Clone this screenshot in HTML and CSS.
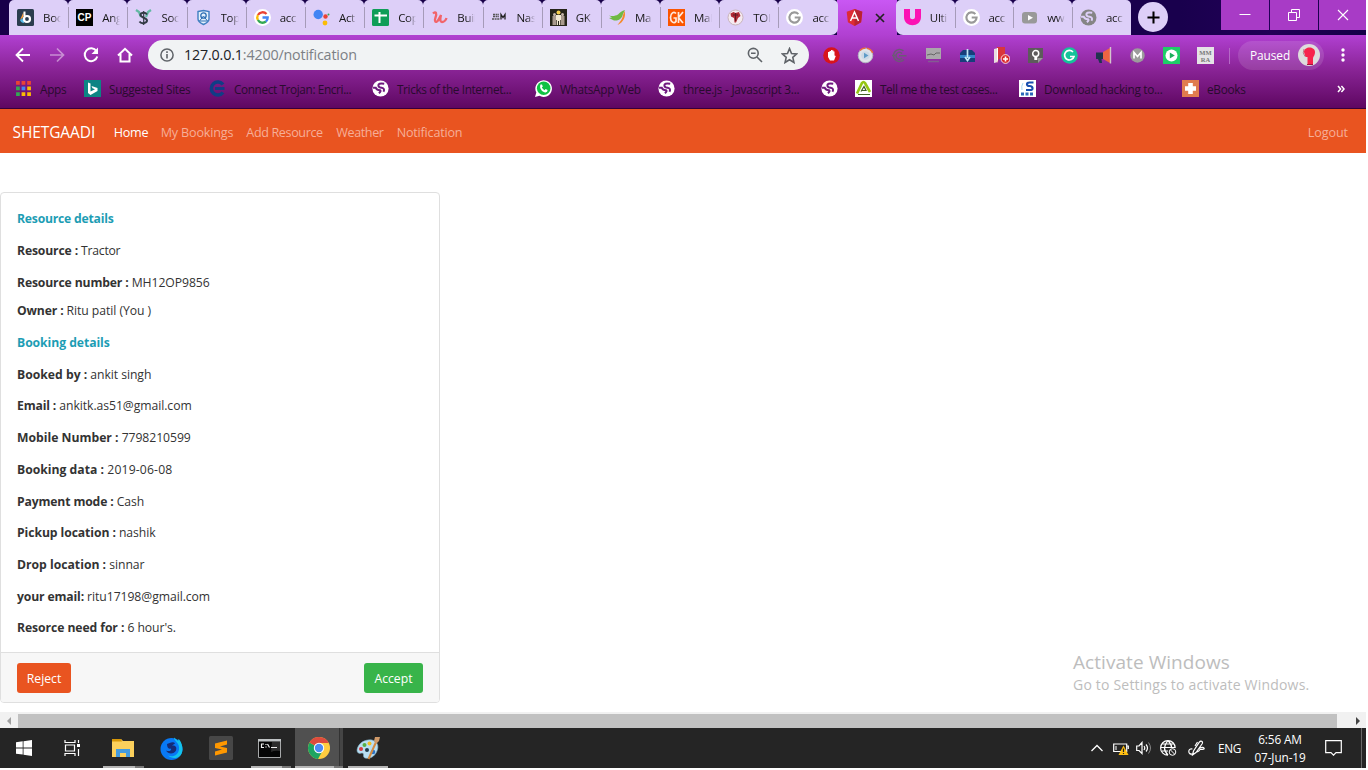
FILE: index.html
```html
<!DOCTYPE html>
<html lang="en">
<head>
<meta charset="utf-8">
<title>Shetgaadi</title>
<link rel="stylesheet" href="styles.css">
</head>
<body>
<svg class="defs" width="0" height="0">
  <symbol id="swirl" viewBox="0 0 16 16"><circle cx="8" cy="8" r="7.600" fill="#fff"/><path d="M11.500 3.500Q5.500 2.500 6 5.500 6.500 7.300 9 7.300 12.500 8 10.800 11M1 7.300H3.500Q4.500 9.600 7.500 9.600 9 10.500 6.500 12.500" fill="none" stroke="#6f1a80" stroke-width="1.900"/></symbol>
  <symbol id="gg" viewBox="0 0 16 16"><circle cx="8" cy="8" r="8" fill="#fff"/><path d="M11.600 4.800A4.800 4.800 0 1 0 12.800 8H8.200" fill="none" stroke="#999" stroke-width="2"/></symbol>
</svg>
<div class="screen">
  <header class="browser">
    <div class="tabstrip">
      <div class="tabs">
        <div class="tab first"><svg class="fav" viewBox="0 0 17 17"><rect width="17" height="17" rx="1.500" fill="#2b3d4f"/><path d="M6.500 3v5L3 11z" fill="#f9a040"/><path d="M3 11l4-2.500V14q-3 0-4-3z" fill="#57b9e8"/><path d="M7.500 2.500v4.500" stroke="#fff" stroke-width="2"/><circle cx="10" cy="10" r="3" fill="none" stroke="#fff" stroke-width="2.200"/></svg><span>Boo</span></div>
        <div class="tab"><svg class="fav" viewBox="0 0 17 17"><rect width="17" height="17" fill="#000"/><text x="8.500" y="12.200" text-anchor="middle" class="g-cp">CP</text></svg><span>Ang</span></div>
        <div class="tab"><svg class="fav" viewBox="0 0 17 17"><path d="M1 1l3 2 2 5M16 1l-3 2-2 5" stroke="#61b8a3" stroke-width="2.200" fill="none"/><path d="M12 5.500C10 2.500 5.500 3.500 5.500 6s6.500 3 6.500 5.500-5.500 4-7.500 1" fill="none" stroke="#333b45" stroke-width="2"/><path d="M8.700 2v14" stroke="#333b45" stroke-width="1.200"/></svg><span>Soc</span></div>
        <div class="tab"><svg class="fav" viewBox="0 0 17 17"><path d="M3 2.500l5.500-1 5.500 1v7.500c0 3-5.500 5.500-5.500 5.500S3 13 3 10z" fill="#e3f0fb" stroke="#3f7fc1" stroke-width="1.400"/><circle cx="8.500" cy="6.500" r="2.700" fill="none" stroke="#2e6fb4" stroke-width="1.300"/><path d="M4.500 12l4-5 4 5z" stroke="#2e6fb4" fill="none"/></svg><span>Top</span></div>
        <div class="tab"><svg class="fav" viewBox="0 0 17 17"><circle cx="8.500" cy="8.500" r="8.500" fill="#fff"/><g fill="none" stroke-width="2.300"><path d="M12.500 5A5.300 5.300 0 0 0 3.900 6" stroke="#ea4335"/><path d="M3.900 6a5.300 5.300 0 0 0 0 5" stroke="#fbbc05"/><path d="M3.900 11a5.300 5.300 0 0 0 8 1.500" stroke="#34a853"/><path d="M11.900 12.500A5 5 0 0 0 13.700 8.500H8.500" stroke="#4285f4"/></g></svg><span>acc</span></div>
        <div class="tab"><svg class="fav" viewBox="0 0 17 17"><circle cx="5.200" cy="5.500" r="4.700" fill="#4285f4"/><circle cx="12.500" cy="7.500" r="2.200" fill="#ea4335"/><circle cx="12" cy="14" r="2.400" fill="#fbbc05"/><circle cx="15.500" cy="5.500" r="1" fill="#34a853"/></svg><span>Act</span></div>
        <div class="tab"><svg class="fav" viewBox="0 0 17 17"><rect width="17" height="17" rx="1.500" fill="#0f9d58"/><path d="M7.500 3v11M2.500 6.500h12.500" stroke="#fff" stroke-width="2"/></svg><span>Cop</span></div>
        <div class="tab"><svg class="fav" viewBox="0 0 17 17"><path d="M2 4.500c3-3 4 0 2.500 4s0 6 2.500 3l3-5.500c-1 4-1 7 1 7s4-2 4.500-4" fill="none" stroke="#f2646a" stroke-width="2.300"/></svg><span>Buil</span></div>
        <div class="tab"><svg class="fav" viewBox="0 0 17 17"><path d="M2 5.500h6M2 7.500h6M1 10h8" stroke="#555" stroke-width="1.300" stroke-dasharray="2 .6"/><path d="M10 10.500V5.500l2 3 2-3v5" fill="none" stroke="#222" stroke-width="1.300"/></svg><span>Nas</span></div>
        <div class="tab"><svg class="fav" viewBox="0 0 17 17"><rect width="17" height="17" fill="#262419"/><path d="M2.500 7h4v9h-4zM10.500 7h4v9h-4z" fill="#a99a8e"/><path d="M6 6h5v5h-1v5H9v-4H8v4H7v-5H6z" fill="#f3e9d2"/><circle cx="8.500" cy="3.500" r="2" fill="#f5cf4d"/><circle cx="4.500" cy="5.500" r="1.500" fill="#c9b8ab"/><circle cx="12.500" cy="5.500" r="1.500" fill="#c9b8ab"/></svg><span>GK</span></div>
        <div class="tab"><svg class="fav" viewBox="0 0 17 17"><path d="M0 6.500c4 1 6 .5 9-1 2-2 4-4 7-4.500l-2 4c-1 5-5 7-9 6.500L0 9l3-.5z" fill="#6fb944"/><path d="M15.500 2c2 6-2 12-7 14 3-4 5-6 5.500-10z" fill="#f58a2b"/></svg><span>Ma</span></div>
        <div class="tab"><svg class="fav" viewBox="0 0 17 17"><rect width="17" height="17" fill="#fb5500"/><path d="M8 4.500C6 2 2.500 4 2.500 8.500S6 15 8 12.500V9H5.500M10.500 3v11M15 3l-4.500 5.500L15 14" fill="none" stroke="#ffe9dc" stroke-width="1.700"/></svg><span>Mak</span></div>
        <div class="tab"><svg class="fav" viewBox="0 0 17 17"><circle cx="8.500" cy="8.500" r="7.500" fill="#f5eaf0" stroke="#c9b5bb"/><path d="M3.500 4.500l3-1.500 2 1 3.500-1 1.500 4-2.500 2-2 4.500H7.500L7 9 4 7.500z" fill="#b02a34"/><path d="M6 6h5M8.500 4v8" stroke="#5d1920"/></svg><span>TOI</span></div>
        <div class="tab last-before"><svg class="fav"><use href="#gg"/></svg><span>acc</span></div>
        <div class="tab active"><svg class="fav" viewBox="0 0 17 17"><path d="M8.500 0l7.800 2.800-1.200 10.400-6.600 3.700-6.600-3.700L.7 2.800z" fill="#dd2c35"/><path d="M8.500 0l7.800 2.800-1.200 10.400-6.600 3.700z" fill="#b92331"/><path d="M4.500 12l4-9 4 9M6.200 9h4.600" fill="none" stroke="#fff" stroke-width="1.500"/></svg><svg class="x" viewBox="0 0 10 10"><path d="M1 1l8 8M9 1L1 9" stroke="#222" stroke-width="1.700"/></svg></div>
        <div class="tab after"><svg class="fav" viewBox="0 0 17 17"><path d="M0 0h6v8c0 3 5 3 5 0V0h6v8c0 11-17 11-17 0z" fill="#fb12b4"/></svg><span>Ulti</span></div>
        <div class="tab late"><svg class="fav"><use href="#gg"/></svg><span>acc</span></div>
        <div class="tab late"><svg class="fav" viewBox="0 0 17 17"><rect x="1" y="3" width="15" height="11.500" rx="3" fill="#999"/><path d="M7 6l5 2.700L7 11.500z" fill="#fff"/></svg><span>www</span></div>
        <div class="tab late end"><svg class="fav" viewBox="0 0 16 16"><circle cx="8" cy="8" r="7.500" fill="#858585"/><path d="M11.500 3.500Q5.500 2.500 6 5.500 6.500 7.300 9 7.300 12.500 8 10.800 11M1 7.300H3.500Q4.500 9.600 7.500 9.600 9 10.500 6.500 12.500" fill="none" stroke="#ddcff8" stroke-width="1.900"/></svg><span>acc</span></div>
      </div>
      <button class="newtab"><svg viewBox="0 0 14 14"><path d="M7 .5v13M.5 7h13" stroke="#000" stroke-width="2.200"/></svg></button>
      <div class="wincontrols">
        <i><svg viewBox="0 0 12 12"><path d="M.5 5.500h11" stroke="#fff"/></svg></i>
        <i><svg viewBox="0 0 12 12"><path d="M.5 3.500h8v8h-8zM3.500 3V.5h8v8H9" fill="none" stroke="#fff"/></svg></i>
        <i><svg viewBox="0 0 12 12"><path d="M1 1l10 10M11 1L1 11" stroke="#fff" stroke-width="1.100"/></svg></i>
      </div>
    </div>
    <div class="toolbar">
      <div class="navicons">
        <svg viewBox="0 0 18 18"><path d="M16 9H3M9 2.500L2.500 9 9 15.500" fill="none" stroke="#fff" stroke-width="1.800"/></svg>
        <svg class="dim" viewBox="0 0 18 18"><path d="M2 9h13M9 2.500L15.500 9 9 15.500" fill="none" stroke="#fff" stroke-width="1.700"/></svg>
        <svg viewBox="0 0 18 18"><path d="M14.500 5.200A6.400 6.400 0 1 0 15.300 10.500" fill="none" stroke="#fff" stroke-width="2"/><path d="M16 1.500V8H9.500z" fill="#fff"/></svg>
        <svg viewBox="0 0 18 18"><path d="M2 9.500L9 2.800l7 6.700M4.500 8v7.500h9V8" fill="none" stroke="#fff" stroke-width="2"/></svg>
      </div>
      <div class="omnibox">
        <svg class="info" viewBox="0 0 14 14"><circle cx="7" cy="7" r="6.100" fill="none" stroke="#5f6368" stroke-width="1.500"/><path d="M7 6v4.500M7 3.300v1.600" stroke="#5f6368" stroke-width="1.600"/></svg>
        <span class="url"><b>127.0.0.1</b>:4200/notification</span>
        <svg class="mag" viewBox="0 0 16 16"><circle cx="6.300" cy="6.300" r="4.900" fill="none" stroke="#5f6368" stroke-width="1.600"/><path d="M10 10l5 5M4 6.300h4.600" stroke="#5f6368" stroke-width="1.600"/></svg>
        <svg class="star" viewBox="0 0 16 16"><path d="M8 1.500l1.900 4.600 4.900.4-3.700 3.200 1.100 4.900L8 12l-4.200 2.600 1.100-4.900L1.200 6.500l4.900-.4z" fill="none" stroke="#5f6368" stroke-width="1.500"/></svg>
      </div>
      <div class="exts">
        <svg viewBox="0 0 17 17"><circle cx="8.500" cy="8.500" r="8.300" fill="#d8141c"/><path d="M5 5v5l2 3.500h4L12.800 9l-1.300-.5V4.500h-1V3.500H9.400V3H8v1H6.500v1z" fill="#fff"/></svg>
        <svg viewBox="0 0 17 17"><circle cx="8.500" cy="8.500" r="7.300" fill="#dfe2e8" stroke="#b3b3c2"/><circle cx="8.500" cy="8.500" r="4.300" fill="#cbd9e6"/><path d="M3 3.500A7.400 7.400 0 0 1 8.500 1M10 1.200A7.400 7.400 0 0 1 15.700 6" stroke="#ed6c3c" stroke-width="1.500" fill="none"/><path d="M7 5.800l4.500 2.700L7 11.200z" fill="#5e9bc7"/></svg>
        <svg viewBox="0 0 17 17"><path d="M12.500 4A6 6 0 1 0 13 12.500M11 6.500a3.400 3.400 0 1 0 0 4.500M8 8.700h7.500M1 8.500h4" fill="none" stroke="#6c5a76" stroke-width="1.500"/></svg>
        <svg viewBox="0 0 17 17"><path d="M1 1h15v11H1z" fill="#aaa7ab"/><path d="M2 8l4-1 3 1 2-2 4 0" stroke="#666" fill="none"/><path d="M3 14.500h11" stroke="#845b92" stroke-width="1.500"/></svg>
        <svg viewBox="0 0 17 17"><path d="M1 6l3-3h9l3 3v9H1z" fill="#173e7b"/><path d="M1 8h15v3H1z" fill="#3285c8"/><path d="M8.500 2v9M6 10l2.500 3.500L11 10" fill="none" stroke="#c2e8f7" stroke-width="1.700"/></svg>
        <svg viewBox="0 0 17 17"><path d="M1 2l4-1v14l-4 1z" fill="#e8dedf"/><path d="M4 0h8v12H6l-2 4z" fill="#d9363b"/><path d="M5 1v12l-1 3V1z" fill="#fff"/><circle cx="12.500" cy="12" r="4.400" fill="#dc292d" stroke="#fff" stroke-width=".8"/><path d="M10 12h5M12.500 9.500v5" stroke="#fff" stroke-width="1.600"/></svg>
        <svg viewBox="0 0 17 17"><path d="M1 1h15v10l-5 5H1z" fill="#5d5b5b"/><path d="M11 16v-5h5z" fill="#999"/><circle cx="8.700" cy="6.600" r="3" fill="none" stroke="#fff" stroke-width="1.500"/><path d="M7.300 10h3v3h-3z" fill="#fff"/></svg>
        <svg viewBox="0 0 17 17"><circle cx="8.500" cy="8.500" r="8.300" fill="#15c39a"/><path d="M12 5A4.800 4.800 0 1 0 13 9.500H9" fill="none" stroke="#fff" stroke-width="1.700"/></svg>
        <svg viewBox="0 0 17 17"><path d="M1 5.500h7V12H6.500l.5 4H4.500L3 12H1z" fill="#20344f"/><path d="M8 5l7-4v15l-7-4z" fill="#ed6442"/><path d="M15.500 0v16.500" stroke="#d4c4cf" stroke-width="1.400"/></svg>
        <svg viewBox="0 0 17 17"><circle cx="8.500" cy="8.500" r="7.200" fill="#9c9c9c"/><path d="M5 11.500v-6l3.500 4 3.500-4v6" fill="none" stroke="#fff" stroke-width="1.700"/></svg>
        <svg viewBox="0 0 17 17"><path d="M0 0h17v17H0z" fill="#1ece67"/><circle cx="8.500" cy="8.500" r="6" fill="#fff"/><path d="M6.800 5.500l5 3-5 3z" fill="#1cae5a"/></svg>
        <svg viewBox="0 0 17 17"><path d="M0 0h17v17H0z" fill="#e5e3e6"/><text x="8.500" y="7.500" text-anchor="middle" class="g-mm">MM</text><text x="8.500" y="14.500" text-anchor="middle" class="g-mm">RA</text></svg>
      </div>
      <div class="profile"><span>Paused</span><svg viewBox="0 0 22 22"><circle cx="11" cy="11" r="11" fill="#dedcdc"/><path d="M6 8c0-6 11-6 11 0 0 4-2 4-2 7v6H9.500v-8H7.500z" fill="#f7234c"/><path d="M6 5q-2 4 1 7.500" stroke="#bb7c8a" fill="none"/><path d="M9 20.500h6" stroke="#a2173c"/></svg></div>
      <svg class="dots" viewBox="0 0 4 14"><circle cx="2" cy="2" r="1.700"/><circle cx="2" cy="7" r="1.700"/><circle cx="2" cy="12" r="1.700"/></svg>
    </div>
    <div class="bookmarks">
      <div class="bm b1"><svg viewBox="0 0 16 16"><g><path d="M1 1h3.500v3.500H1zM6.200 1h3.500v3.500H6.200zM11.500 1H15v3.500h-3.500z" fill="#ea4335"/><path d="M1 6.200h3.500v3.500H1zM1 11.500h3.500V15H1z" fill="#34a853"/><path d="M6.200 6.200h3.500v3.500H6.200z" fill="#4285f4"/><path d="M11.500 6.200H15v3.500h-3.500zM6.200 11.500h3.500V15H6.200zM11.500 11.500H15V15h-3.500z" fill="#fbbc05"/></g></svg><span>Apps</span></div>
      <div class="bm b2"><svg viewBox="0 0 17 17"><path d="M0 0h17v17H0z" fill="#0c8484"/><path d="M4 2.500l2.500 1v8L11 9.300 8.500 8.300 7.500 6 13.500 8v3L6.500 15 4 13z" fill="#fff"/></svg><span>Suggested Sites</span></div>
      <div class="bm b3"><svg viewBox="0 0 17 17"><path d="M14 4.500A6.500 6.500 0 1 0 14 12.500" fill="none" stroke="#103d86" stroke-width="3.600"/><path d="M6 8.500h9.500" stroke="#103d86" stroke-width="2.800"/></svg><span>Connect Trojan: Encri...</span></div>
      <div class="bm b4"><svg><use href="#swirl"/></svg><span>Tricks of the Internet...</span></div>
      <div class="bm b5"><svg viewBox="0 0 17 17"><path d="M0 17l1.300-4.500A8.300 8.300 0 1 1 4.500 15.800z" fill="#fff"/><circle cx="8.700" cy="8.300" r="6.800" fill="#0fc143"/><path d="M5.500 4.500l1.500 0 .8 2-1 1.100q1 1.800 2.800 2.600l1-1.100 2 1q0 2.500-2.500 2.300C7 12 4 8 5.500 4.500z" fill="#fff"/></svg><span>WhatsApp Web</span></div>
      <div class="bm b6"><svg><use href="#swirl"/></svg><span>three.js - Javascript 3...</span></div>
      <div class="bm b7"><svg><use href="#swirl"/></svg></div>
      <div class="bm b8"><svg viewBox="0 0 17 17"><path d="M0 0h17v17H0z" fill="#fff"/><path d="M2 13.500L7 3q1.500-2 3 0l5 9" fill="none" stroke="#96c713" stroke-width="2.600"/><path d="M3 14.500h12M6 11.500l3-5 2 4H7" fill="none" stroke="#415f26" stroke-width="1.200"/></svg><span>Tell me the test cases...</span></div>
      <div class="bm b9"><svg viewBox="0 0 17 17"><path d="M0 0h17v17H0z" fill="#fff"/><path d="M14.500 2.500H10.500Q8 2.500 8 4.300T10.500 6 13.500 8 10.500 10H7" fill="none" stroke="#174eae" stroke-width="2.200"/><path d="M2 12.500h3v3H2zM6.500 12.500h3v3h-3zM11 12.500h3v3h-3z" fill="#2a68b9"/><path d="M4 3q-2 3-1 7" stroke="#a3d7ef" fill="none"/></svg><span>Download hacking to...</span></div>
      <div class="bm b10"><svg viewBox="0 0 17 17"><path d="M0 0h17v17H0z" fill="#e07c4f"/><path d="M8.500 3v11M3 8.500h11" stroke="#fff" stroke-width="4.600"/></svg><span>eBooks</span></div>
      <svg class="more" viewBox="0 0 8 8"><path d="M1 1l2.600 3L1 7M4.400 1L7 4 4.400 7" fill="none" stroke="#fff" stroke-width="1.500"/></svg>
    </div>
  </header>

  <nav class="navbar">
    <a class="brand">SHETGAADI</a>
    <a class="on">Home</a><a class="n2">My Bookings</a><a class="n3">Add Resource</a><a class="n4">Weather</a><a class="n5">Notification</a>
    <a class="logout">Logout</a>
  </nav>

  <main class="page">
    <section class="card">
      <div class="card-body">
        <h6 class="snug">Resource details</h6>
        <p class="snug"><b>Resource :</b> Tractor</p>
        <p class="tight"><b>Resource number :</b> MH12OP9856</p>
        <p><b>Owner :</b> Ritu patil (You )</p>
        <h6>Booking details</h6>
        <p><b class="wide">Booked by :</b> ankit singh</p>
        <p><b>Email :</b> ankitk.as51@gmail.com</p>
        <p><b class="wide">Mobile Number :</b> 7798210599</p>
        <p class="loose"><b class="wide">Booking data :</b> 2019-06-08</p>
        <p><b>Payment mode :</b> Cash</p>
        <p><b class="mid">Pickup location :</b> nashik</p>
        <p><b class="wide">Drop location :</b> sinnar</p>
        <p><b>your email:</b> ritu17198@gmail.com</p>
        <p><b class="mid">Resorce need for :</b> 6 hour's.</p>
      </div>
      <footer><button class="reject">Reject</button><button class="accept">Accept</button></footer>
    </section>
    <aside class="watermark"><div class="w1">Activate Windows</div><div class="w2">Go to Settings to activate Windows.</div></aside>
  </main>

  <div class="hscroll"><svg class="sl" viewBox="0 0 18 16"><path d="M11 5v8L7 9z" fill="#a0a0a0"/></svg><div class="thumb"></div><svg class="sr" viewBox="0 0 17 16"><path d="M7 5v8l4-4z" fill="#444"/></svg></div>

  <div class="taskbar">
    <div class="tb start"><svg viewBox="0 0 16 16"><path d="M0 2.300l6.700-1v6.200H0zM7.500 1.200L16 0v7.500H7.500zM0 8.400h6.700v6.200L0 13.700zM7.500 8.400H16V16l-8.500-1.200z" fill="#fff"/></svg></div>
    <div class="tb view"><svg viewBox="0 0 17 16"><path d="M1 0v2.500h10V0M1 16v-2.500h10V16M1.500 5h9v6h-9zM14.500 0v3M14.500 9v7" fill="none" stroke="#fff" stroke-width="1.200"/><path d="M13 4h3v3h-3z" fill="#fff"/></svg></div>
    <div class="tb files run stack"><svg viewBox="0 0 22 19"><path d="M0 0h9l2 2h11v16H0z" fill="#fbd05c"/><path d="M0 0h9l1 2.500H0z" fill="#d79708"/><path d="M4 18v-8h14v8h-4v-4H8v4z" fill="#439bdf"/></svg></div>
    <div class="tb fox"><svg viewBox="0 0 23 23"><circle cx="11.500" cy="12" r="11" fill="#0879f5"/><path d="M14 .5c0 4 6 5 5 12-1 6-6 8-11 6 4 4 14 4 14.500-6C22.500 7 20 3 18.500 2l-.5 2z" fill="#13c3ed"/><path d="M7 7l4-1.500q3-1 4 1l-3 2c4-.5 5 2 4 5-2 4-8 4-10 0 3 1.500 6 0 5-2-1.500 1-4 0-4-4.500z" fill="#152c76"/></svg></div>
    <div class="tb sub"><svg viewBox="0 0 24 24"><rect width="24" height="24" rx="1.500" fill="#474747"/><path d="M18 4.500v4l-7 2 7 1.500v4.500l-12 3v-4l7-2-7-1.500V7.500z" fill="#ff9800"/></svg></div>
    <div class="tb cmd run stack"><svg viewBox="0 0 23 19"><path d="M.5.500h22v18H.5z" fill="#050505" stroke="#a7a9aa"/><path d="M0 0h23v2.500H0z" fill="#bfc3c5"/><path d="M14 3h8v9q-5-1-9 1z" fill="#2c2c2c"/><path d="M6 5H3.500v3.500H6M8 5v1M8 7.500v1M9.500 5l2 3.500M13 8.500h6" fill="none" stroke="#eee" stroke-width="1.200"/></svg></div>
    <div class="tb chr run stack"><svg viewBox="0 0 22 22"><circle cx="11" cy="11" r="11" fill="#ffcd40"/><path d="M11 11L1.500 5.500A11 11 0 0 0 10 22l5-9z" fill="#1da462"/><path d="M11 11L1.500 5.500A11 11 0 0 1 20.700 6H11z" fill="#dd4b3e"/><circle cx="11" cy="11" r="5.200" fill="#fff"/><circle cx="11" cy="11" r="4.200" fill="#4c8bf5"/></svg></div>
    <div class="tb paint run"><svg viewBox="0 0 24 24"><path d="M1 14C2 7 9 3 16 4c7 2 7 8 4 13-3 5-8 6-11 5-3-1 0-5-3-5-3 1-5 0-5-3z" fill="#b9dff2" stroke="#7eacc4" stroke-width=".6"/><circle cx="5" cy="13" r="2" fill="#d93b40"/><circle cx="8.500" cy="9" r="2" fill="#56ae45"/><circle cx="13.500" cy="7.500" r="2" fill="#f4bc21"/><circle cx="11" cy="14" r="2" fill="#203a4a"/><circle cx="17" cy="16" r="2.300" fill="#2d74c5"/><path d="M12.500 23l8-18" stroke="#d58b42" stroke-width="2"/><path d="M18 5l1-4 5 0-1 4-3 3z" fill="#cf9969"/></svg></div>
    <div class="tray">
      <svg class="t1" viewBox="0 0 12 8"><path d="M.5 7L6 1.500 11.500 7" fill="none" stroke="#fff" stroke-width="1.300"/></svg>
      <svg class="t2" viewBox="0 0 16 14"><path d="M.7 3h13v7.500H.7zM14 5h1.300v3" fill="none" stroke="#fff" stroke-width="1.200"/><path d="M3 5v4" stroke="#fff"/><path d="M10.500 4.500L15.500 14h-10z" fill="#fdbe11"/><path d="M10.500 7.500v3.500M10.500 12v1" stroke="#222" stroke-width="1.200"/></svg>
      <svg class="t3" viewBox="0 0 16 14"><path d="M.7 5H3l3-3.500v11L3 9.500H.7zM8 5q1.500 2 0 4M10 3.500q3 3.500 0 7" fill="none" stroke="#fff" stroke-width="1.200"/><path d="M12.500 1.500q4 5.500 0 11" fill="none" stroke="#888"/></svg>
      <svg class="t4" viewBox="0 0 17 16"><path d="M8 15.200A7.300 7.300 0 1 1 15.200 8M8 .7Q1 8 8 15M8 .7q3.500 3 3.700 7M.8 7.500H15M2 4h12M2 11h6" fill="none" stroke="#fff" stroke-width="1.200"/><circle cx="12.500" cy="12" r="3.300" fill="#252525" stroke="#fff"/><path d="M10.500 10l4 4" stroke="#fff"/></svg>
      <svg class="t5" viewBox="0 0 17 16"><path d="M4.500 9Q.8 8.500.8 11.500t4 2.500M4.500 15l1-4L11.500 2q1.500-1.500 2.500-.5t0 2.500L8 12.500z M9.500 2L7 6M11 8.500q4-2 5-.5T12 9.500q-1 2-3 2.500" fill="none" stroke="#fff" stroke-width="1.200"/></svg>
      <span class="eng">ENG</span>
      <span class="clock"><span class="time">6:56 AM</span><span class="date">07-Jun-19</span></span>
      <svg class="note" viewBox="0 0 17 16"><path d="M.7.700h15.600v12H11L8.500 15.200 6 12.700H.7z" fill="none" stroke="#fff" stroke-width="1.200"/></svg>
      <i class="peek"></i>
    </div>
  </div>
</div>
</body>
</html>
```
FILE: styles.css
```css
* { box-sizing: border-box; }
body { margin: 0; background: #fff; font-family: "Open Sans", "Noto Sans", sans-serif; overflow: hidden; }
svg { display: block; flex: none; }
button { border: 0; padding: 0; font: inherit; }
.defs { position: absolute; }
.screen { width: 1366px; height: 768px; display: flex; flex-direction: column; }

/* browser chrome */
.browser { height: 109px; flex: none; border-bottom: 1px solid #380039; background: linear-gradient(#c957f3 0, #b140d2 35px, #8b2598 68px, #5e0761 108px); font-size: 12px; }
.tabstrip { height: 35px; display: flex; padding-left: 9px; background: linear-gradient(90deg, #180049 0 837px, transparent 837px 897px, #19004d 897px 1180px, #220057 1270px, #140047); }
.tabs { display: flex; flex: none; }
.tab { flex: none; width: 59.200px; height: 35px; padding: 0 0 0 8px; display: flex; align-items: center; gap: 9px; background: #ddcff8; border-radius: 5px 5px 0 0; position: relative; }
.tab::after { content: ""; position: absolute; right: -1px; top: 7px; width: 1px; height: 21px; background: #a69bb9; z-index: 1; }
.tab.active { background: none; gap: 12px; width: 58.200px; }
.tab.active::after, .tab.last-before::after, .tab.end::after { display: none; }
.tab.last-before { border-bottom-right-radius: 7px; }
.tab.after { border-bottom-left-radius: 7px; width: 58.700px; }
.tab.late { width: 58.700px; }
.fav { width: 17px; height: 17px; }
.tab span { width: 18px; overflow: hidden; white-space: nowrap; font-size: 11.500px; letter-spacing: -.3px; color: #161616; -webkit-mask-image: linear-gradient(90deg, #000 55%, transparent); mask-image: linear-gradient(90deg, #000 55%, transparent); }
.x { width: 10px; height: 10px; }
.g-cp { font: bold 10px "Liberation Sans", sans-serif; fill: #fff; }
.g-mm { font: bold 6.500px "Liberation Serif", serif; fill: #777; }
.newtab { width: 30px; height: 30px; margin: 2px 0 0 7.500px; border-radius: 50%; background: #ddcff8; display: grid; place-items: center; }
.newtab svg { width: 13px; height: 13px; }
.wincontrols { margin-left: auto; display: flex; gap: 1px; }
.wincontrols i { width: 48px; height: 30px; background: #a83bc6; display: grid; place-items: center; }
.wincontrols i:last-child { width: 47px; }
.wincontrols svg { width: 12px; height: 12px; }
.toolbar { height: 40px; display: flex; align-items: center; padding-left: 14px; }
.navicons { display: flex; gap: 16px; width: 134px; }
.navicons svg { width: 18px; height: 18px; }
.dim { opacity: .45; }
.omnibox { width: 661px; height: 30px; border-radius: 15px; background: #f1f3f4; display: flex; align-items: center; padding: 0 11px 0 12px; }
.info { width: 14px; height: 14px; }
.url { font-size: 14.300px; letter-spacing: -.17px; color: #7c8085; margin-left: 10px; padding-bottom: 2px; }
.url b { font-weight: 400; color: #202124; }
.mag { width: 16px; height: 16px; margin-left: auto; }
.star { width: 17px; height: 17px; margin-left: 18px; }
.exts { display: flex; gap: 17px; margin-left: 14px; }
.exts svg { width: 17px; height: 17px; }
.profile { margin-left: 24px; width: 86px; height: 29px; border-radius: 15px; background: rgba(255,255,255,.12); display: flex; align-items: center; justify-content: space-between; padding: 0 4px 0 12px; color: #fff; font-size: 11.900px; letter-spacing: -.1px; position: relative; }
.profile::before { content: ""; position: absolute; left: -9px; top: 7px; width: 1px; height: 16px; background: #b56ac6; }
.profile svg { width: 22px; height: 22px; }
.dots { width: 4px; height: 14px; margin-left: 17px; fill: #fff; }
.bookmarks { height: 27px; display: flex; align-items: center; padding-left: 15px; color: #290b2e; font-size: 11.800px; letter-spacing: -.29px; white-space: nowrap; }
.bm { display: flex; align-items: center; gap: 8px; flex: none; }
.bm svg { width: 17px; height: 17px; }
.b1 { width: 69px; } .b2 { width: 125px; } .b3 { width: 163px; } .b4 { width: 163px; }
.b5 { width: 123px; } .b6 { width: 163px; } .b7 { width: 34px; } .b8 { width: 164px; } .b9 { width: 163px; } .b10 { width: 155px; }
.b3, .b4, .b8 { letter-spacing: -.38px; }
.b6 { letter-spacing: -.25px; }
.more { width: 8px; height: 8px; }

/* site navigation */
.navbar { height: 44px; flex: none; background: #e95420; display: flex; align-items: center; padding: 2px 18px 0 12.500px; color: #f6ae98; font-size: 12.600px; white-space: nowrap; }
.navbar a { margin-right: 13px; letter-spacing: -.1px; }
.navbar .brand { color: #fff; font-size: 15.500px; margin-right: 18.500px; }
.navbar .on { color: #fff; letter-spacing: -.25px; margin-right: 12.500px; }
.navbar .n2 { letter-spacing: -.18px; }
.navbar .n3 { letter-spacing: -.38px; margin-right: 13.500px; }
.navbar .n4 { letter-spacing: -.4px; margin-right: 13px; }
.navbar .n5 { letter-spacing: -.2px; }
.navbar .logout { margin-left: auto; margin-right: 0; }

/* booking card */
.page { height: 559px; flex: none; padding-top: 39px; display: flex; justify-content: space-between; align-items: flex-start; }
.card { width: 440px; height: 511px; border: 1px solid #dfdfdf; border-radius: 4px; display: flex; flex-direction: column; overflow: hidden; color: #333; font-size: 12.200px; }
.card-body { padding: 16.400px 16px 0; flex: 1; }
.card h6, .card p { margin: 0 0 12px; font-size: 12.200px; line-height: 19.740px; letter-spacing: -.06px; font-weight: 400; }
.card p.tight { margin-bottom: 8.520px; }
.card h6 { color: #1d9db4; font-weight: 700; }
.card .snug { letter-spacing: -.22px; }
.card .loose { letter-spacing: .15px; }
.card b { letter-spacing: -.15px; }
.card b.mid { letter-spacing: -.08px; }
.card b.wide { letter-spacing: 0; }
.card footer { height: 50px; border-top: 1px solid #dfdfdf; background: #f7f7f7; padding: 10px 16px; display: flex; justify-content: space-between; }
.card button { height: 30px; border-radius: 3px; color: #fff; font-size: 12.200px; }
.reject { width: 54px; background: #e95420; }
.accept { width: 59px; background: #38b44a; }
.watermark { align-self: flex-end; width: 293px; height: 63px; color: #bdbdbd; white-space: nowrap; }
.w1 { font-size: 19px; line-height: 27px; letter-spacing: .06px; }
.w2 { font-size: 14px; line-height: 18px; letter-spacing: .2px; }

/* horizontal scrollbar */
.hscroll { height: 16px; flex: none; background: #f1f1f1; display: flex; justify-content: space-between; }
.sl { width: 18px; height: 16px; }
.sr { width: 17px; height: 16px; margin-left: 12px; }
.thumb { flex: 1; margin-top: 2px; background: #c1c1c1; }

/* taskbar */
.taskbar { height: 40px; flex: none; background: #252525; display: flex; color: #fff; }
.tb { width: 49px; height: 40px; display: grid; place-items: center; position: relative; }
.start { width: 48px; } .start svg { width: 16px; height: 16px; }
.view { width: 50px; padding-right: 1px; } .view svg { width: 17px; height: 16px; }
.files { width: 50px; } .files svg { width: 22px; height: 19px; }
.fox { width: 47px; } .fox svg { width: 23px; height: 23px; }
.sub { width: 51px; padding-left: 1px; } .sub svg { width: 24px; height: 24px; }
.cmd { width: 49px; padding-right: 2px; } .cmd svg { width: 23px; height: 19px; }
.chr { width: 48px; background: linear-gradient(90deg, #505050 44px, #333 44px 45px, #454545 45px); } .chr svg { width: 22px; height: 22px; }
.paint svg { width: 24px; height: 24px; }
.run::after { content: ""; position: absolute; left: 5px; right: 4px; bottom: 0; height: 2px; background: #b5b5b5; }
.stack::after { background: linear-gradient(90deg, #b5b5b5 calc(100% - 9px), #777 calc(100% - 9px)); }
.chr::after { left: 0; right: 0; }
.tray { margin-left: auto; display: flex; align-items: center; font-size: 11.800px; }
.t1 { width: 12px; height: 8px; margin-right: 10px; }
.t2, .t3 { width: 16px; height: 14px; margin-right: 7px; }
.t3 { margin-right: 8px; }
.t4 { width: 17px; height: 16px; margin-right: 11px; }
.t5 { width: 17px; height: 16px; margin-right: 13px; }
.eng { width: 24px; letter-spacing: -.3px; padding-bottom: 1px; }
.clock { display: flex; flex-direction: column; align-items: center; width: 56px; line-height: 18px; margin-left: 10px; padding-bottom: 1px; letter-spacing: -.12px; white-space: nowrap; }
.note { width: 17px; height: 16px; margin-left: 17px; }
.peek { width: 1px; height: 40px; background: #686868; margin: 0 4px 0 19px; }
```
